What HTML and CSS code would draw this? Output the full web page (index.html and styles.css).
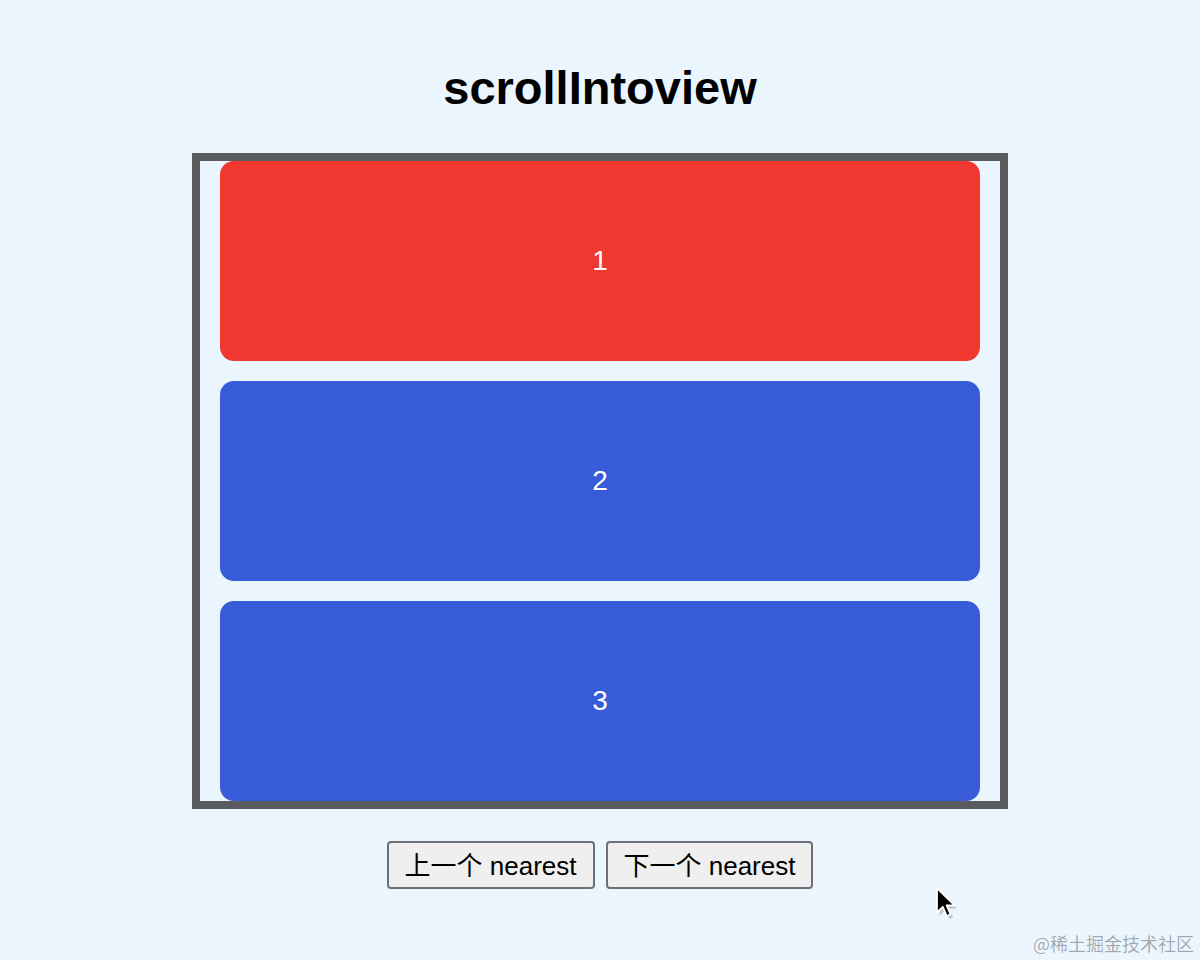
FILE: index.html
```html
<!DOCTYPE html>
<html lang="zh-CN">
<head>
  <meta charset="UTF-8" />
  <title>scrollIntoview</title>
  <link rel="stylesheet" href="styles.css">
</head>
<body>

  <h1 class="title">scrollIntoview</h1>

  <!-- Scroll box -->
  <div class="scroll-box">
    <div class="item active">1</div>
    <div class="item">2</div>
    <div class="item">3</div>
  </div>

  <!-- Controls -->
  <div class="controls">
    <button>上一个 nearest</button>
    <button>下一个 nearest</button>
  </div>

  <!-- Mouse cursor -->
  <svg class="cursor" width="26" height="36" viewBox="0 0 26 36">
    <path d="M3 4 L3 28 L8.8 22.4 L12.8 31.5 L16.6 29.9 L12.6 20.9 L20.6 20.9 Z" fill="rgba(0,0,0,0.18)" transform="translate(1.5 1.5)"/>
    <path d="M2 2 L2 26.5 L7.8 20.9 L11.8 30 L15.6 28.4 L11.6 19.4 L19.6 19.4 Z" fill="#000" stroke="#fff" stroke-width="1.8" stroke-linejoin="round"/>
  </svg>

  <div class="watermark">@稀土掘金技术社区</div>

</body>
</html>
```

FILE: styles.css
```css
* { margin: 0; padding: 0; box-sizing: border-box; }

body {
  background-color: #ebf5fd;
  font-family: "Liberation Sans", Arial, "Noto Sans CJK SC", sans-serif;
  width: 1200px;
  height: 960px;
  position: relative;
  overflow: hidden;
}

.title {
  padding-top: 61px;
  margin-bottom: 39px;
  text-align: center;
  font-size: 47px;
  line-height: 53px;
  font-weight: bold;
  color: #000;
}

.scroll-box {
  width: 816px;
  height: 656px;
  margin: 0 auto;
  border: 8px solid #595b5e;
  padding: 0 20px;
  display: flex;
  flex-direction: column;
  gap: 20px;
  overflow: hidden;
}

.item {
  flex: 0 0 200px;
  border-radius: 14px;
  background-color: #385bd9;
  color: #fff;
  font-size: 28px;
  display: flex;
  align-items: center;
  justify-content: center;
}

.item.active {
  background-color: #f03830;
}

.controls {
  margin-top: 32px;
  display: flex;
  justify-content: center;
  gap: 11px;
}

.controls button {
  height: 48px;
  padding: 0 16px 3px;
  font-family: "Liberation Sans", Arial, "Noto Sans CJK SC", sans-serif;
  font-size: 26px;
  color: #000;
  background-color: #efefef;
  border: 2px solid #6d7074;
  border-radius: 4px;
}

/* overlays */
.cursor {
  position: absolute;
  left: 935px;
  top: 886px;
}

.watermark {
  position: absolute;
  right: 6px;
  bottom: 4px;
  font-family: "Noto Sans CJK SC", sans-serif;
  font-size: 18px;
  color: rgba(0, 0, 0, 0.32);
}
```
